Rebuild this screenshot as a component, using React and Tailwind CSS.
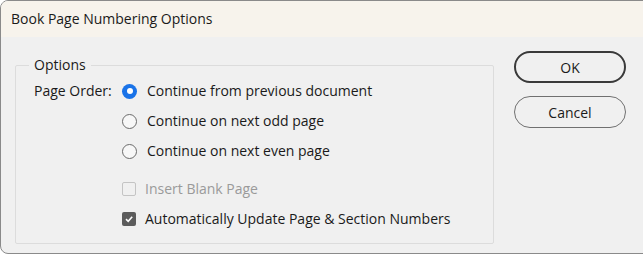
export default function App() {
  const font = { fontFamily: '"Open Sans", "Noto Sans", sans-serif' };
  return (
    <div className="h-[256px] w-[643px] overflow-hidden bg-white" style={font}>
      <div className="flex h-[254px] w-[660px] flex-col overflow-hidden rounded-lg border border-[#8a8a8a] bg-[#f0f0f0]">
        <div className="flex h-[36px] shrink-0 items-center bg-[#f7f3ec] pl-[10px] text-[14px] leading-[20px] text-[#1a1a1a]">
          Book Page Numbering Options
        </div>
        <div className="flex items-start pl-[14px]">
          <div className="relative mt-[28px] h-[179px] w-[479px] rounded-[2px] border border-[#dcdcdc] px-[18px] pt-[10px] text-[14px] leading-[20px] text-[#1a1a1a]">
            <span className="absolute left-[13px] top-[-11px] bg-[#f0f0f0] px-[5px]">Options</span>
            <div className="flex">
              <div className="flex h-[30px] w-[88px] items-center">Page Order:</div>
              <div className="flex flex-col">
                <Radio checked label="Continue from previous document" />
                <Radio label="Continue on next odd page" />
                <Radio label="Continue on next even page" />
                <div className="mt-[8px] flex flex-col">
                  <Check disabled label="Insert Blank Page" />
                  <Check checked label="Automatically Update Page & Section Numbers" />
                </div>
              </div>
            </div>
          </div>
          <div className="ml-[20px] mt-[14px] flex flex-col gap-[13px]">
            <button className="h-[32px] w-[112px] rounded-full border-2 border-[#3a3a3a] bg-[#f0f0f0] text-[14px] text-[#1a1a1a]">
              OK
            </button>
            <button className="h-[32px] w-[112px] rounded-full border border-[#707070] bg-[#f0f0f0] text-[14px] text-[#1a1a1a]">
              Cancel
            </button>
          </div>
        </div>
      </div>
    </div>
  );
}

function Radio({ checked, label }) {
  return (
    <div className="flex h-[30px] items-center">
      {checked ? (
        <span className="mr-[10px] flex h-[15px] w-[15px] items-center justify-center rounded-full bg-[#1a73e8]">
          <span className="h-[6px] w-[6px] rounded-full bg-white" />
        </span>
      ) : (
        <span className="mr-[10px] h-[15px] w-[15px] rounded-full border border-[#6a6a6a] bg-[#f7f7f7]" />
      )}
      <span>{label}</span>
    </div>
  );
}

function Check({ checked, disabled, label }) {
  return (
    <div className="flex h-[30px] items-center">
      {checked ? (
        <span className="mr-[9px] flex h-[14px] w-[14px] items-center justify-center rounded-[2px] bg-[#5c5c5c]">
          <svg width="10" height="10" viewBox="0 0 10 10">
            <path d="M2 5.2 L4.2 7.3 L8.2 2.8" fill="none" stroke="white" strokeWidth="1.6" />
          </svg>
        </span>
      ) : (
        <span className="mr-[9px] h-[14px] w-[14px] rounded-[2px] border border-[#c4c4c4]" />
      )}
      <span className={disabled ? "text-[#9a9a9a]" : ""}>{label}</span>
    </div>
  );
}
